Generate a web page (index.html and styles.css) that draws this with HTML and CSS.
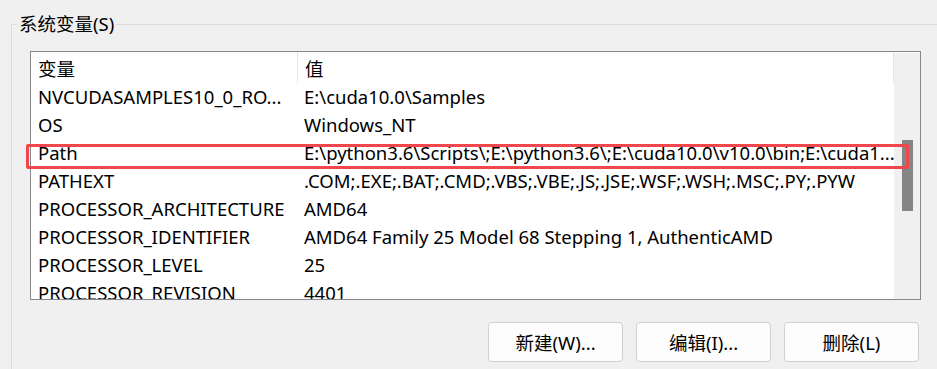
FILE: index.html
```html
<!DOCTYPE html>
<html lang="zh-CN">
<head>
    <meta charset="UTF-8">
    <title>系统变量</title>
    <link rel="stylesheet" href="styles.css">
</head>
<body>
    <fieldset class="group">
        <legend>系统变量(S)</legend>
        <div class="listbox">
            <div class="list-main">
                <div class="list-head">
                    <div class="col-name">变量</div>
                    <div class="col-value">值</div>
                </div>
                <div class="list-body">
                    <div class="row"><div class="col-name">NVCUDASAMPLES10_0_RO...</div><div class="col-value">E:\cuda10.0\Samples</div></div>
                    <div class="row"><div class="col-name">OS</div><div class="col-value">Windows_NT</div></div>
                    <div class="row"><div class="col-name">Path</div><div class="col-value">E:\python3.6\Scripts\;E:\python3.6\;E:\cuda10.0\v10.0\bin;E:\cuda1...</div></div>
                    <div class="row"><div class="col-name">PATHEXT</div><div class="col-value">.COM;.EXE;.BAT;.CMD;.VBS;.VBE;.JS;.JSE;.WSF;.WSH;.MSC;.PY;.PYW</div></div>
                    <div class="row"><div class="col-name">PROCESSOR_ARCHITECTURE</div><div class="col-value">AMD64</div></div>
                    <div class="row"><div class="col-name">PROCESSOR_IDENTIFIER</div><div class="col-value">AMD64 Family 25 Model 68 Stepping 1, AuthenticAMD</div></div>
                    <div class="row"><div class="col-name">PROCESSOR_LEVEL</div><div class="col-value">25</div></div>
                    <div class="row"><div class="col-name">PROCESSOR_REVISION</div><div class="col-value">4401</div></div>
                </div>
            </div>
            <div class="scrollbar">
                <div class="thumb"></div>
            </div>
        </div>
        <div class="buttons">
            <button type="button">新建(W)...</button>
            <button type="button">编辑(I)...</button>
            <button type="button">删除(L)</button>
        </div>
    </fieldset>
    <!-- red annotation drawn over the Path row -->
    <div class="highlight"></div>
</body>
</html>
```

FILE: styles.css
```css
    html, body {
        margin: 0;
        height: 100%;
        overflow: hidden;
    }
    body {
        font-family: "Noto Sans", "Noto Sans CJK SC", sans-serif;
        font-size: 18.5px;
        color: #000;
        background-color: #f0f0f0;
    }
    .group {
        margin: 12px -40px 0 11px;
        padding: 15px 0 40px 18px;
        border: 1px solid #dcdcdc;
        min-height: 400px;
    }
    .group legend {
        margin-left: -13px;
        padding: 0 2px;
        line-height: 24px;
        font-size: 18.5px;
    }
    .listbox {
        display: flex;
        width: 889px;
        height: 247px;
        border: 1px solid #828790;
        background-color: #fff;
        overflow: hidden;
    }
    .list-main {
        flex: 1;
        overflow: hidden;
    }
    .list-head {
        display: flex;
        height: 31px;
        line-height: 34px;
        border-right: 1px solid #e5e5e5;
    }
    .list-head .col-name {
        border-right: 1px solid #e5e5e5;
    }
    .row {
        display: flex;
        height: 28px;
        line-height: 28px;
        white-space: nowrap;
    }
    .col-name {
        width: 259px;
        padding-left: 7px;
        flex: none;
        overflow: hidden;
    }
    .col-value {
        flex: 1;
        padding-left: 7px;
        overflow: hidden;
    }
    .scrollbar {
        width: 26px;
        margin-top: 1px;
        background-color: #f0f0f0;
        flex: none;
    }
    .thumb {
        margin: 87px 0 0 8px;
        width: 11px;
        height: 71px;
        background-color: #858585;
    }
    .buttons {
        display: flex;
        justify-content: flex-end;
        gap: 13px;
        width: 889px;
        padding-right: 2px;
        margin-top: 22px;
    }
    .buttons button {
        width: 135px;
        height: 40px;
        font-family: inherit;
        font-size: 18.5px;
        color: #000;
        background-color: #fdfdfd;
        border: 1px solid #d0d0d0;
        border-radius: 4px;
    }
    .highlight {
        position: absolute;
        left: 26px;
        top: 144px;
        width: 877px;
        height: 19px;
        border: 3px solid #f0474c;
        border-radius: 2px;
    }
```
